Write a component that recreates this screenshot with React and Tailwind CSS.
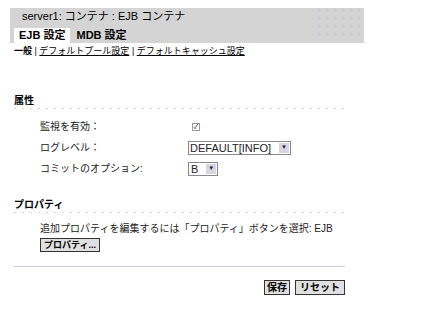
export default function App() {
  const font = { fontFamily: "'Liberation Sans', 'Noto Sans CJK JP', sans-serif" };
  const dots = "h-px bg-[linear-gradient(to_right,#f0c4f0_2px,transparent_2px)] bg-[length:8px_1px]";
  return (
    <div className="w-[421px] h-[329px] bg-white text-[10px] text-[#222]" style={font}>
      <div className="pt-2 pl-[10px] w-[364px]">
        {/* header bar */}
        <div className="relative bg-[#d4d4d4] h-[35px]">
          <div className="pl-3 pt-[1px] text-[11px] leading-[14px] text-black">server1: コンテナ : EJB コンテナ</div>
          <div className="flex items-end mt-[5px] pl-1 gap-1">
            <div className="bg-white px-[5px] h-[15px] leading-[15px] text-[11px] font-bold text-black">EJB 設定</div>
            <div className="px-[2px] h-[15px] leading-[15px] text-[11px] font-bold text-black">MDB 設定</div>
          </div>
          <div className="absolute right-[4px] top-[2px] grid grid-cols-6 gap-x-[6px] gap-y-[6px]">
            {Array.from({ length: 24 }).map((_, i) => (
              <div key={i} className="w-[2px] h-[2px] bg-[#c8c4dc]" />
            ))}
          </div>
        </div>
        {/* sub tabs */}
        <div className="mt-[2px] pl-1 text-[9px] leading-[12px] text-black">
          <span className="font-bold">一般</span> | <span className="underline">デフォルトプール設定</span> | <span className="underline">デフォルトキャッシュ設定</span>
        </div>
      </div>

      <div className="pl-[14px] w-[345px]">
        {/* attributes */}
        <div className="mt-[38px] font-bold text-[10px] leading-[12px] text-black">属性</div>
        <div className={`mt-[1px] ${dots}`} />
        <div className="pl-[26px] mt-[7px] flex flex-col">
          <div className="flex items-center h-[21px]">
            <div className="w-[152px]">監視を有効：</div>
            <div className="w-[8px] h-[8px] border border-[#999] bg-white flex items-center justify-center text-[7px] leading-none">✓</div>
          </div>
          <div className="flex items-center h-[21px]">
            <div className="w-[148px]">ログレベル：</div>
            <div className="flex items-center border border-[#888] h-[14px] pl-[1px] bg-white">
              <span className="text-[11px] leading-[12px] pr-2">DEFAULT[INFO]</span>
              <span className="w-[10px] h-[10px] bg-[#d8d4e4] flex items-center justify-center text-[6px] mr-[1px]">▼</span>
            </div>
          </div>
          <div className="flex items-center h-[21px]">
            <div className="w-[148px]">コミットのオプション:</div>
            <div className="flex items-center border border-[#888] h-[14px] pl-[2px] bg-white">
              <span className="text-[11px] leading-[12px] pr-2">B</span>
              <span className="w-[10px] h-[10px] bg-[#d8d4e4] flex items-center justify-center text-[6px] mr-[1px]">▼</span>
            </div>
          </div>
        </div>

        {/* properties */}
        <div className="mt-[20px] font-bold text-[10px] leading-[12px] text-black">プロパティ</div>
        <div className={`mt-[1px] ${dots}`} />
        <div className="pl-[26px] mt-[10px]">
          <div className="leading-[12px]">追加プロパティを編集するには「プロパティ」ボタンを選択: EJB</div>
          <button className="mt-[3px] h-[14px] px-[3px] bg-[#e0e0e0] border border-[#333] text-[9px] leading-[12px] font-bold text-black">プロパティ...</button>
        </div>
        <div className="mt-[14px] border-b border-[#cfcbe0]" />
        <div className="flex justify-end gap-[5px] mt-[13px]">
          <button className="h-[15px] px-[2px] bg-[#e0e0e0] border border-[#333] text-[10px] leading-[13px] font-bold text-black">保存</button>
          <button className="h-[15px] px-[4px] bg-[#e0e0e0] border border-[#333] text-[10px] leading-[13px] font-bold text-black">リセット</button>
        </div>
      </div>
    </div>
  );
}
